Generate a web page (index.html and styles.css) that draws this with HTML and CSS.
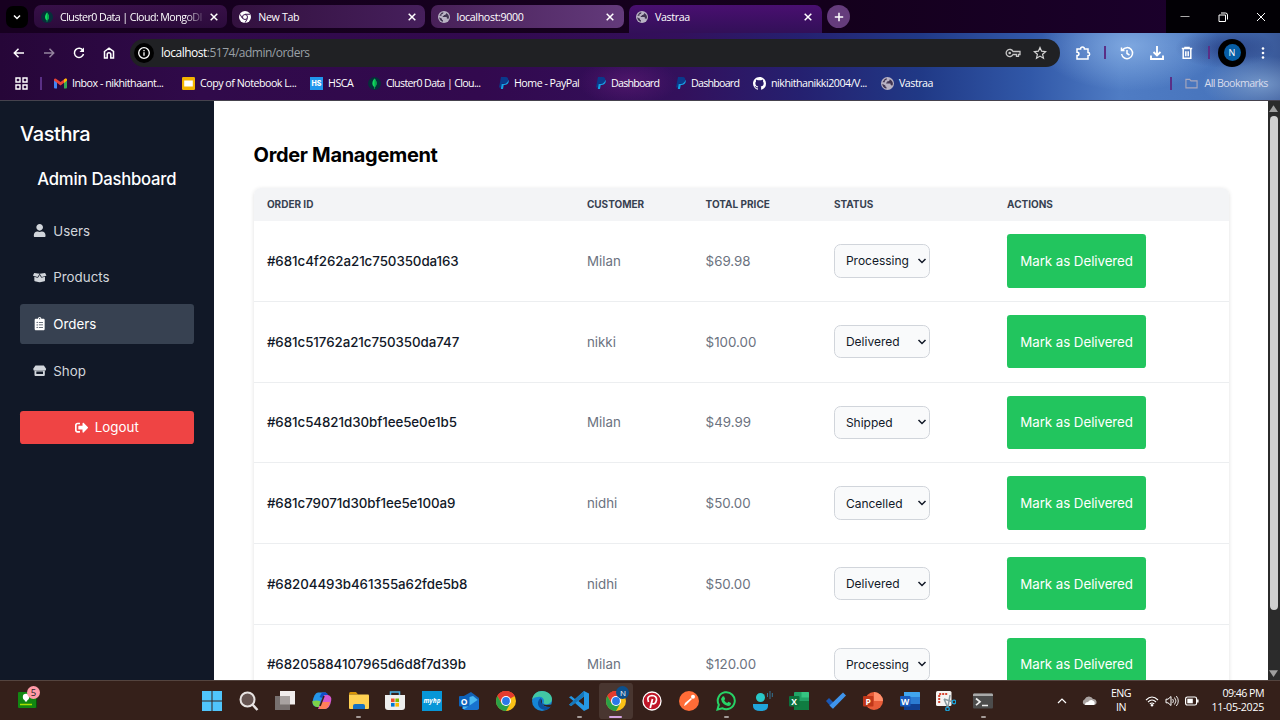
FILE: index.html
```html
<!DOCTYPE html>
<html lang="en">
<head>
<meta charset="utf-8">
<title>Vastraa</title>
<link rel="stylesheet" href="styles.css">
</head>
<body>
<svg class="defs" width="0" height="0" aria-hidden="true">
  <defs>
    <symbol id="x" viewBox="0 0 10 10"><path d="M1.7 1.7l6.6 6.6M8.3 1.7L1.7 8.3" stroke="#fff" stroke-width="1.5" fill="none"/></symbol>
    <symbol id="mongo" viewBox="0 0 13 13"><circle cx="6.5" cy="6.5" r="6.5" fill="#06303a"/><path d="M6.5 1.5C3.400 5 4 8.500 6.200 10v1.700h.6V10C9 8.500 9.600 5 6.500 1.500z" fill="#10dc60"/><path d="M6.500 1.500v9C9 8.500 9.600 5 6.500 1.500z" fill="#08aa4c"/></symbol>
    <symbol id="globe" viewBox="0 0 24 24"><circle cx="12" cy="12" r="12" fill="#b9b3c4"/><path d="M10 21.500C5.500 20.500 2.500 17 2.300 12.500l5.700 3v2l2 1zM20 16.500c-.6-1.500-1.500-2-2.500-2V12h-8v-2h2V8h2.500l2-2V4c3 1.300 6 4.500 6 8.500 0 1.500-.8 2.800-2 4zM3 9l4-5.500 4-1-1 3-3 1v3H3z" fill="#403451"/></symbol>
    <symbol id="paypal" viewBox="0 0 10 12"><path d="M2 0h4.500C9 0 9.800 2 9 4 8.300 6 7 6.800 4.500 6.800H3L2.300 10.500H0z" fill="#0a3a8c"/><path d="M9.400 2.800C10.600 5.500 8.500 8 5.800 8H4.700L4 12H1.800L2.700 7h2C7 7 8.900 5.500 9.400 2.800z" fill="#13a0e4"/></symbol>
    <symbol id="chrome" viewBox="0 0 24 24"><circle cx="12" cy="12" r="12" fill="#fbc116"/><path d="M12 12L1.610 6A12 12 0 0 1 22.390 6z" fill="#e33b2e"/><path d="M12 6h10.390A12 12 0 0 0 1.610 6L6.800 15z" fill="#e33b2e"/><path d="M1.610 6A12 12 0 0 0 12 24l5.200-9H6.800z" fill="#2aa147"/><circle cx="12" cy="12" r="6" fill="#fff"/><circle cx="12" cy="12" r="4.700" fill="#2a78e8"/></symbol>
    <symbol id="chevron" viewBox="0 0 10 8"><path d="M1.500 2L5 5.500 8.500 2" fill="none" stroke="#111827" stroke-width="1.500"/></symbol>
  </defs>
</svg>

<header class="browser">
  <div class="tabstrip">
    <button class="tab-search"><svg width="10" height="10" viewBox="0 0 10 10"><path d="M2 3.500l3 3 3-3" fill="none" stroke="#fff" stroke-width="1.500"/></svg></button>
    <div class="tab tab-one"><svg class="fav"><use href="#mongo"/></svg><span class="tab-title fade">Cluster0 Data | Cloud: MongoDI</span><svg class="close"><use href="#x"/></svg></div>
    <div class="tab tab-two"><svg class="fav" viewBox="0 0 24 24"><circle cx="12" cy="12" r="12" fill="#fff"/><circle cx="12" cy="12" r="5" fill="#fff" stroke="#3d174f" stroke-width="2"/><path d="M12 6.500h10M7 15L2 6.500M17 15l-5 8.500" stroke="#3d174f" stroke-width="2"/></svg><span class="tab-title">New Tab</span><svg class="close"><use href="#x"/></svg></div>
    <div class="tab tab-three"><svg class="fav"><use href="#globe"/></svg><span class="tab-title">localhost:9000</span><svg class="close"><use href="#x"/></svg></div>
    <div class="tab active"><svg class="fav"><use href="#globe"/></svg><span class="tab-title">Vastraa</span><svg class="close"><use href="#x"/></svg></div>
    <button class="new-tab"><svg width="12" height="12" viewBox="0 0 12 12"><path d="M6 1.800v8.400M1.800 6h8.400" stroke="#fff" stroke-width="1.500"/></svg></button>
    <div class="window-controls">
      <span><svg width="12" height="12" viewBox="0 0 12 12"><path d="M1.500 5.500h9" stroke="#aaa" stroke-width="1"/></svg></span>
      <span><svg width="12" height="12" viewBox="0 0 12 12"><path d="M2 4h6.500v6.500H2z" fill="none" stroke="#fff"/><path d="M4 2h4.500a2 2 0 0 1 2 2v4.500" fill="none" stroke="#fff"/></svg></span>
      <span><svg width="12" height="12" viewBox="0 0 12 12"><path d="M2 2l8 8M10 2l-8 8" stroke="#fff"/></svg></span>
    </div>
  </div>

  <div class="toolbar">
    <div class="nav-buttons">
      <svg viewBox="0 0 16 16"><path d="M13 8H3.500M7.500 3.800L3.300 8l4.200 4.200" class="ln"/></svg>
      <svg viewBox="0 0 16 16" opacity=".5"><path d="M3 8H12.500M8.500 3.800L12.700 8l-4.200 4.200" class="ln"/></svg>
      <svg viewBox="0 0 16 16"><path d="M12 5.500A4.600 4.600 0 1 0 12.500 9" class="ln"/><path d="M13 2.500V7H8.500z" fill="#fff"/></svg>
      <svg viewBox="0 0 16 16"><path d="M3.500 6.500L8 3.200l4.500 3.300v6.600H9.800V9.500a1.800 1.800 0 0 0-3.600 0v3.600H3.500z" class="ln"/></svg>
    </div>
    <div class="omnibox">
      <span class="site-info"><svg width="14" height="14" viewBox="0 0 14 14"><circle cx="7" cy="7" r="5.300" fill="none" stroke="#fff" stroke-width="1.300"/><path d="M7 6.200v3.600M7 4v1.300" stroke="#fff" stroke-width="1.300"/></svg></span>
      <span class="url"><b>localhost</b>:5174/admin/orders</span>
      <svg class="key" width="16" height="12" viewBox="0 0 16 12"><path d="M8 4.500A3.600 3.600 0 1 0 8 7.500h3.500V9.300h2V7.500H15V4.500z" fill="none" stroke="#c7c7c7" stroke-width="1.300"/><circle cx="4.700" cy="6" r="1.300" fill="#c7c7c7"/></svg>
      <svg width="14" height="14" viewBox="0 0 14 14"><path d="M7 1.500l1.600 3.700 4 .4-3 2.700.9 3.900L7 10.100l-3.500 2.100.9-3.900-3-2.700 4-.4z" fill="none" stroke="#d5d5d5" stroke-width="1.200"/></svg>
    </div>
    <div class="tools">
      <svg class="puzzle" viewBox="0 0 16 16"><path d="M2 4h3.600c0-2.600 3.800-2.600 3.800 0H13v3.500c2.200 0 2.200 3.300 0 3.300V14H2v-3.500c2.600 0 2.600-3.200 0-3.200z" class="ln"/></svg>
      <i class="sep"></i>
      <svg class="history" viewBox="0 0 16 16"><path d="M3.500 5A5.500 5.500 0 1 1 2.600 9M2.500 2.500V5.500h3M8 5v3.500l2.500 1.500" class="ln"/></svg>
      <svg class="download" viewBox="0 0 16 16"><path d="M8 1v9M4.500 7L8 10.500 11.500 7M2 10.500V14h12v-3.500" class="ln heavy"/></svg>
      <svg class="trash" viewBox="0 0 16 16"><path d="M2.800 3.500h10.400M6 3V2.400h4v1M4.200 4v9.300h7.600V4M6.800 6.200v5M9.200 6.200v5" class="ln"/></svg>
      <i class="sep"></i>
      <span class="profile"><span>N</span></span>
      <svg class="dots" viewBox="0 0 4 14"><circle cx="2" cy="2.500" r="1.300" fill="#fff"/><circle cx="2" cy="7" r="1.300" fill="#fff"/><circle cx="2" cy="11.500" r="1.300" fill="#fff"/></svg>
    </div>
  </div>

  <div class="bookmarks">
    <svg class="apps" viewBox="0 0 13 13"><path d="M1 1h4v4H1zM8 1h4v4H8zM1 8h4v4H1zM8 8h4v4H8z" fill="none" stroke="#fff" stroke-width="1.400"/></svg>
    <i class="sep"></i>
    <div class="bm bm-mail"><svg viewBox="0 0 13 13"><path d="M0 2.500L3 4v7.500H1q-1 0-1-1z" fill="#4285f4"/><path d="M13 2.500L10 4v7.500h2q1 0 1-1z" fill="#34a853"/><path d="M0 3.500V2.600Q.6 1 2 1.700L6.500 5 11 1.700q1.400-.7 2 .9v.9L6.500 8.500z" fill="#ea4335"/><path d="M10 2.500l1-.8q1.400-.7 2 .9v1L10 6z" fill="#fbbc04"/></svg><span>Inbox - nikhithaant...</span></div>
    <div class="bm bm-slides"><svg viewBox="0 0 13 13"><rect width="13" height="13" rx="1.300" fill="#f4b400"/><rect x="2.200" y="3.500" width="8.600" height="6" fill="#fff"/></svg><span>Copy of Notebook L...</span></div>
    <div class="bm bm-hsca"><svg viewBox="0 0 13 13"><rect width="13" height="13" fill="#2196ed"/><text x="6.500" y="9.200" class="hs">HS</text></svg><span>HSCA</span></div>
    <div class="bm bm-cluster"><svg><use href="#mongo"/></svg><span>Cluster0 Data | Clou...</span></div>
    <div class="bm bm-home"><svg class="pp"><use href="#paypal"/></svg><span>Home - PayPal</span></div>
    <div class="bm bm-dash"><svg class="pp"><use href="#paypal"/></svg><span>Dashboard</span></div>
    <div class="bm bm-dash2"><svg class="pp"><use href="#paypal"/></svg><span>Dashboard</span></div>
    <div class="bm bm-git"><svg viewBox="0 0 16 16"><path fill="#fff" d="M8 0C3.580 0 0 3.580 0 8c0 3.540 2.290 6.530 5.470 7.590.4.070.55-.17.55-.38 0-.19-.01-.82-.01-1.490-2.010.37-2.530-.49-2.690-.94-.09-.23-.48-.94-.82-1.130-.28-.15-.68-.52-.01-.53.63-.01 1.080.58 1.230.82.72 1.210 1.870.87 2.330.66.07-.52.28-.87.51-1.070-1.780-.2-3.640-.89-3.640-3.950 0-.87.31-1.590.82-2.150-.08-.2-.36-1.020.08-2.120 0 0 .67-.21 2.200.82a7.600 7.600 0 0 1 4 0c1.530-1.040 2.200-.82 2.200-.82.44 1.100.16 1.920.08 2.120.51.56.82 1.270.82 2.150 0 3.070-1.870 3.750-3.650 3.950.29.25.54.73.54 1.480 0 1.070-.01 1.930-.01 2.200 0 .21.15.46.55.38A8 8 0 0 0 16 8c0-4.420-3.580-8-8-8z"/></svg><span>nikhithanikki2004/V...</span></div>
    <div class="bm bm-vastraa"><svg><use href="#globe"/></svg><span>Vastraa</span></div>
    <i class="sep last"></i>
    <div class="bm bm-all"><svg viewBox="0 0 14 12"><path d="M1 1.500h4l1.500 1.700H13v7.500H1z" fill="none" stroke="#a9a8bd" stroke-width="1.200"/></svg><span>All Bookmarks</span></div>
  </div>
</header>

<div class="page">
  <aside class="sidebar">
    <div class="brand">Vasthra</div>
    <h2 class="side-title">Admin Dashboard</h2>
    <nav class="menu">
      <a class="menu-item"><svg viewBox="0 0 448 512"><path d="M224 256c70.700 0 128-57.300 128-128S294.700 0 224 0 96 57.300 96 128s57.300 128 128 128zm89.600 32h-16.700c-22.200 10.200-46.900 16-72.900 16s-50.600-5.800-72.900-16h-16.700C60.200 288 0 348.200 0 422.400V464c0 26.500 21.500 48 48 48h352c26.500 0 48-21.500 48-48v-41.600c0-74.200-60.200-134.400-134.400-134.400z"/></svg>Users</a>
      <a class="menu-item"><svg viewBox="0 0 640 512"><path d="M425.700 256c-16.900 0-32.800-9-41.400-23.400L320 126l-64.200 106.600c-8.700 14.500-24.600 23.500-41.500 23.500-4.500 0-9-.6-13.300-1.900L64 215v178c0 14.700 10 27.500 24.200 31l216.200 54.100c10.200 2.500 20.900 2.500 31 0L551.800 424c14.200-3.600 24.200-16.400 24.200-31V215l-137 39.100c-4.300 1.300-8.800 1.900-13.300 1.900zm212.600-112.200L586.800 41c-3.100-6.200-9.800-9.800-16.700-8.900L320 64l91.700 152.100c3.800 6.300 11.400 9.300 18.500 7.300l197.900-56.500c9.900-2.900 14.700-13.900 10.200-23.100zM53.200 41L1.700 143.800c-4.600 9.200.3 20.200 10.100 23l197.900 56.500c7.100 2 14.700-1 18.500-7.300L320 64 69.800 32.100c-6.900-.8-13.500 2.700-16.600 8.900z"/></svg>Products</a>
      <a class="menu-item current"><svg viewBox="0 0 384 512"><path d="M336 64h-80c0-35.300-28.700-64-64-64s-64 28.700-64 64H48C21.500 64 0 85.500 0 112v352c0 26.500 21.500 48 48 48h288c26.500 0 48-21.500 48-48V112c0-26.500-21.500-48-48-48zM96 424c-13.300 0-24-10.700-24-24s10.700-24 24-24 24 10.700 24 24-10.700 24-24 24zm0-96c-13.300 0-24-10.700-24-24s10.700-24 24-24 24 10.700 24 24-10.700 24-24 24zm0-96c-13.300 0-24-10.700-24-24s10.700-24 24-24 24 10.700 24 24-10.700 24-24 24zm96-192c13.300 0 24 10.700 24 24s-10.700 24-24 24-24-10.700-24-24 10.700-24 24-24zm128 368c0 4.400-3.600 8-8 8H168c-4.400 0-8-3.600-8-8v-16c0-4.400 3.600-8 8-8h144c4.400 0 8 3.600 8 8v16zm0-96c0 4.400-3.600 8-8 8H168c-4.400 0-8-3.600-8-8v-16c0-4.400 3.600-8 8-8h144c4.400 0 8 3.600 8 8v16zm0-96c0 4.400-3.600 8-8 8H168c-4.400 0-8-3.600-8-8v-16c0-4.400 3.600-8 8-8h144c4.400 0 8 3.600 8 8v16z"/></svg>Orders</a>
      <a class="menu-item"><svg viewBox="0 0 16 14"><path d="M3 .8h10l2.700 3.900q.3 2.300-1.700 2.300H2Q0 7 .3 4.700z"/><path fill-rule="evenodd" d="M1.800 7.300h12.400v5q0 1.200-1.200 1.200H3q-1.200 0-1.200-1.200zM4 8.100v2.800h8V8.100z"/></svg>Shop</a>
    </nav>
    <button class="logout"><svg viewBox="0 0 512 512"><path d="M497 273L329 441c-15 15-41 4.500-41-17v-96H152c-13.300 0-24-10.700-24-24v-96c0-13.300 10.700-24 24-24h136V88c0-21.400 25.900-32 41-17l168 168c9.300 9.400 9.300 24.600 0 34zM192 436v-40c0-6.600-5.400-12-12-12H96c-17.700 0-32-14.300-32-32V160c0-17.700 14.300-32 32-32h84c6.600 0 12-5.400 12-12V76c0-6.600-5.400-12-12-12H96c-53 0-96 43-96 96v192c0 53 43 96 96 96h84c6.600 0 12-5.400 12-12z"/></svg>Logout</button>
  </aside>

  <main class="content">
    <h1>Order Management</h1>
    <div class="card">
      <table>
        <colgroup><col class="c-id"><col class="c-customer"><col class="c-price"><col class="c-status"><col></colgroup>
        <thead><tr><th>Order ID</th><th>Customer</th><th>Total Price</th><th>Status</th><th>Actions</th></tr></thead>
        <tbody>
          <tr><td class="id">#681c4f262a21c750350da163</td><td>Milan</td><td>$69.98</td><td><div class="select">Processing<svg><use href="#chevron"/></svg></div></td><td><button class="deliver">Mark as Delivered</button></td></tr>
          <tr><td class="id">#681c51762a21c750350da747</td><td>nikki</td><td>$100.00</td><td><div class="select">Delivered<svg><use href="#chevron"/></svg></div></td><td><button class="deliver">Mark as Delivered</button></td></tr>
          <tr><td class="id">#681c54821d30bf1ee5e0e1b5</td><td>Milan</td><td>$49.99</td><td><div class="select">Shipped<svg><use href="#chevron"/></svg></div></td><td><button class="deliver">Mark as Delivered</button></td></tr>
          <tr><td class="id">#681c79071d30bf1ee5e100a9</td><td>nidhi</td><td>$50.00</td><td><div class="select">Cancelled<svg><use href="#chevron"/></svg></div></td><td><button class="deliver">Mark as Delivered</button></td></tr>
          <tr><td class="id">#68204493b461355a62fde5b8</td><td>nidhi</td><td>$50.00</td><td><div class="select">Delivered<svg><use href="#chevron"/></svg></div></td><td><button class="deliver">Mark as Delivered</button></td></tr>
          <tr><td class="id">#68205884107965d6d8f7d39b</td><td>Milan</td><td>$120.00</td><td><div class="select">Processing<svg><use href="#chevron"/></svg></div></td><td><button class="deliver">Mark as Delivered</button></td></tr>
        </tbody>
      </table>
    </div>
  </main>

  <div class="scrollbar">
    <svg viewBox="0 0 8 8"><path d="M4 1L8 7H0z" fill="#9f9f9f"/></svg>
    <div class="thumb"></div>
    <svg viewBox="0 0 8 8"><path d="M4 7L0 1h8z" fill="#9f9f9f"/></svg>
  </div>
</div>

<footer class="taskbar">
  <div class="widget"><svg width="20" height="16" viewBox="0 0 20 16"><rect width="18" height="16" rx="1" fill="#128712"/><path d="M18 3h1v13h-1z" fill="#0a4d0b"/><circle cx="8" cy="5" r="3.200" fill="#fff"/><path d="M6 6h4l-1 3.500H7z" fill="#fff"/><path d="M2 12.500h12" stroke="#a8e000" stroke-width="1.500"/></svg><span class="badge">5</span></div>
  <div class="apps-row">
    <span class="app"><svg viewBox="0 0 20 20"><path d="M0 0h9.500v9.500H0zM10.500 0H20v9.500h-9.500zM0 10.500h9.500V20H0zM10.500 10.500H20V20h-9.500z" fill="#50c5fb"/></svg></span>
    <span class="app"><svg viewBox="0 0 20 20"><circle cx="8.500" cy="8.500" r="7" fill="#665451" stroke="#e8e3e2" stroke-width="2"/><path d="M13.500 13.500L18.500 19" stroke="#e8e3e2" stroke-width="2.400"/></svg></span>
    <span class="app"><svg viewBox="0 0 20 20"><path d="M5 0h15v13.500H5z" fill="#f1eded"/><path d="M0 5h15v14H0z" fill="#77706f"/><path d="M5 5h10v8.500H5z" fill="#a8a2a1"/></svg></span>
    <span class="app"><svg viewBox="0 0 20 20"><path d="M6 1.500h8L9.500 16H5Q.3 15.500.5 11 2 2 6 1.500z" fill="#2496e9"/><path d="M.5 10q4-1 7.500 0L7.500 16H5Q.2 15 .5 10z" fill="#7ed248"/><path d="M13.500 4H16q4 1 3.200 5.500Q18 17.500 13 18H6l4-9.500Q11 4 13.500 4z" fill="#d458cf"/><path d="M9.500 11H18q-1.700 7-5 7H7z" fill="#ff7f59"/><path d="M10 1.500h3.500q2 0 2.500 2.500h-4l-1.500 3-3-1z" fill="#144ec7"/><path d="M12 5L8 15" stroke="#35201a" stroke-width="1.600"/></svg></span>
    <span class="app running"><svg viewBox="0 0 20 20"><path d="M0 3q0-2 1.500-2H7l2 2.500h-9z" fill="#d99507"/><path d="M0 3.500h19q1 0 1 1V17q0 1-1 1H1q-1 0-1-1z" fill="#ffd152"/><path d="M4 18v-3q0-2 2-2h8q2 0 2 2v3z" fill="#1471c4"/></svg></span>
    <span class="app"><svg viewBox="0 0 20 20"><path d="M5.500 5V1h9v4" fill="none" stroke="#48b1e6" stroke-width="1.500"/><path d="M0 4h20v12q0 3-3 3H3q-3 0-3-3z" fill="#eee"/><path d="M6 7.500h3.600v3.600H6z" fill="#ed4d2b"/><path d="M10.400 7.500H14v3.600h-3.600z" fill="#7fba00"/><path d="M6 12h3.600v3.600H6z" fill="#0078d4"/><path d="M10.400 12H14v3.600h-3.600z" fill="#ffb900"/></svg></span>
    <span class="app"><svg viewBox="0 0 20 20"><path d="M0 0h20v20H0z" fill="#0796d7"/><text x="10" y="12" class="hp">myhp</text></svg></span>
    <span class="app"><svg viewBox="0 0 20 20"><path d="M3 6l9-5 8 6v11H3z" fill="#1261b4"/><path d="M4 8l10-3 5 4v9H4z" fill="#49b8f0"/><path d="M4 19l16-11v9q0 2-2 2z" fill="#1872cf"/><rect y="5" width="10.500" height="10.500" rx="1" fill="#0c62bb"/><text x="5.200" y="13.500" class="logo">O</text></svg></span>
    <span class="app"><svg viewBox="0 0 20 20"><use href="#chrome"/></svg></span>
    <span class="app"><svg viewBox="0 0 20 20"><circle cx="10" cy="10" r="10" fill="#1685d5"/><path d="M0 9C1 3 5 0 10 0c6 0 10 4 10 8 0 4-4 6-7 5-2-.5-1-2-1-3 0-3-3-5-6-4C3 6 1 7 0 9z" fill="#42c7a4"/><path d="M9 7c-5 3-4 11 4 12 3 0 5-2 6-4-5 2-9 0-9-4z" fill="#0b4f9f"/><path d="M10 8c-2 3 0 6 4 6l6-.5v1L18 16q-7 0-8-4z" fill="#35201a"/></svg></span>
    <span class="app running"><svg viewBox="0 0 20 20"><path d="M15 0l5 2.400v15.200L15 20l-9-8-3.800 3L0 13.800 4.500 10 0 6.300 2.200 5 6 8zM15 5.500L9.400 10l5.600 4.500z" fill="#2598e4" fill-rule="evenodd"/><path d="M0 13.700L15 0v5.500L2.200 15z" fill="#1677bb"/></svg></span>
    <span class="app focused"><svg viewBox="0 0 20 20"><use href="#chrome"/></svg><b class="user-badge">N</b></span>
    <span class="app"><svg viewBox="0 0 20 20"><circle cx="10" cy="10" r="9" fill="#c01628" stroke="#fff" stroke-width="1.300"/><path d="M6.500 11Q4 5 10 4.500q5 .3 4.500 4.500-1 5-5 3.500" fill="none" stroke="#fff" stroke-width="1.700"/><path d="M10.500 8l-2.300 9" stroke="#fff" stroke-width="1.800"/></svg></span>
    <span class="app"><svg viewBox="0 0 20 20"><circle cx="10" cy="10" r="10" fill="#ff6c37"/><path d="M5 15l1-3 6-5 1 1-6 6z" fill="#fff"/><circle cx="14" cy="5.800" r="2" fill="#fff"/></svg></span>
    <span class="app running"><svg viewBox="0 0 20 20"><path d="M1.500 18.500l1.300-4.700A8.500 8.500 0 1 1 6.200 17.200z" fill="none" stroke="#27d366" stroke-width="2"/><path d="M6.500 5.500l1.500-.3 1.200 2.800-1 1.200q1 2 3 2.900l1.200-1.300 2.600 1.300q0 3-3 2.900-6-1.500-7-7z" fill="#27d366"/></svg></span>
    <span class="app"><svg viewBox="0 0 20 20"><circle cx="7.500" cy="6.500" r="4.500" fill="#29c8c8"/><path d="M0 13h15v2q0 5-7.500 5T0 15z" fill="#20a5db"/><path d="M14.500 2v4M17 0v8M19.300 2v4" stroke="#347394" stroke-width="1"/></svg></span>
    <span class="app"><svg viewBox="0 0 20 20"><rect x="5" y="1" width="15" height="18" rx="1" fill="#21a366"/><path d="M12.500 1H19q1 0 1 1v4.500h-7.500z" fill="#35c481"/><path d="M5 10h15v8q0 1-1 1H5z" fill="#107c41"/><rect y="5" width="10.500" height="10.500" rx="1" fill="#0c713c"/><text x="5.200" y="13.500" class="logo">X</text></svg></span>
    <span class="app"><svg viewBox="0 0 20 20"><path d="M0 10l3-3 7 7-3.500 3.500z" fill="#1a57b4"/><path d="M3.500 14.500L17 1.500l3 3L7 17.700z" fill="#3f94ec"/></svg></span>
    <span class="app"><svg viewBox="0 0 20 20"><circle cx="11" cy="10" r="9" fill="#e75c38"/><path d="M11 1a9 9 0 0 1 9 9h-9z" fill="#ff8f6b"/><rect y="5" width="10.500" height="10.500" rx="1" fill="#bf3719"/><text x="5.200" y="13.500" class="logo">P</text></svg></span>
    <span class="app"><svg viewBox="0 0 20 20"><rect x="4" y="1" width="16" height="18" rx="1" fill="#2b7cd3"/><path d="M4 1h15q1 0 1 1v4H4z" fill="#41a5ee"/><path d="M4 13h16v5q0 1-1 1H4z" fill="#103f91"/><rect y="5" width="10.500" height="10.500" rx="1" fill="#185abd"/><text x="5.200" y="13.500" class="logo">W</text></svg></span>
    <span class="app"><svg viewBox="0 0 20 20"><rect width="15.500" height="15" rx="1.500" fill="#f5f3f2"/><path d="M3.200 12V3h9" fill="none" stroke="#d9442f" stroke-width="2" stroke-dasharray="2 1"/><path d="M8 8l9 3M14 4l-2 12M8 8l4 9" stroke="#8a9aa0" stroke-width="1.500"/><circle cx="18" cy="11" r="1.800" fill="none" stroke="#1aa2d9" stroke-width="1.300"/><circle cx="11.500" cy="18" r="1.800" fill="none" stroke="#1aa2d9" stroke-width="1.300"/></svg></span>
    <span class="app running"><svg viewBox="0 0 20 20"><rect y="2.500" width="20" height="15" rx="1" fill="#4c4c4c"/><path d="M0 4q0-1.500 1-1.500h18q1 0 1 1.500v1H0z" fill="#a9a9a9"/><path d="M3 7.500l4 3.300-4 3.300M9 14.500h6" fill="none" stroke="#eee" stroke-width="1.700"/></svg></span>
  </div>
  <div class="tray">
    <svg class="up" width="10" height="8" viewBox="0 0 10 8"><path d="M1 6l4-4 4 4" fill="none" stroke="#fff" stroke-width="1.200"/></svg>
    <svg class="cloud" width="15" height="10" viewBox="0 0 15 10"><path d="M3 9a3 3 0 0 1-.3-5.700A4.500 4.500 0 0 1 11 3a3 3 0 0 1 1 6z" fill="#aaa3a1"/><path d="M3 9q0-3 3-3 2.500-3.500 5.500-1A2.600 2.600 0 0 1 12 9z" fill="#fff"/></svg>
    <div class="lang">ENG<br>IN</div>
    <svg class="wifi" width="14" height="12" viewBox="0 0 14 12"><path d="M1 5q6-6 12 0M3 7q4-4 8 0M4.800 9q2.200-2 4.400 0" fill="none" stroke="#fff" stroke-width="1.100"/><circle cx="7" cy="10.300" r="1.200" fill="#fff"/></svg>
    <svg class="sound" width="14" height="12" viewBox="0 0 14 12"><path d="M1 4.200h2L6 1.500v9L3 7.800H1z" fill="none" stroke="#fff"/><path d="M7.700 4q1.500 2 0 4M9.500 2.500q3 3.500 0 7M11.300 1q4 5 0 10" fill="none" stroke="#fff" stroke-width=".9"/></svg>
    <svg class="battery" width="14" height="10" viewBox="0 0 14 10"><rect x=".6" y="1" width="11" height="8" rx="1.800" fill="none" stroke="#fff" stroke-width="1.200"/><rect x="2.300" y="2.700" width="5.500" height="4.600" fill="#fff"/><path d="M12.800 3.500v3" stroke="#fff" stroke-width="1.500"/></svg>
    <div class="clock"><span class="time">09:46 PM</span><br>11-05-2025</div>
  </div>
</footer>
</body>
</html>
```

FILE: styles.css
```css
* { box-sizing: border-box; }
html { font-size: 13.3333px; }
body {
  margin: 0; width: 1280px; height: 720px; overflow: hidden;
  display: flex; flex-direction: column;
  font-family: Inter, "Liberation Sans", sans-serif;
}
button { border: 0; padding: 0; font: inherit; }
.defs { position: absolute; }
svg { flex: none; display: block; }
.ln { fill: none; stroke: #fff; stroke-width: 1.5; }
.heavy { stroke-width: 1.9; }

/* Browser frame */
.browser {
  height: 100.67px; flex: none; border-bottom: 1px solid #45424d;
  font-family: "Open Sans", "Noto Sans", sans-serif; font-size: 10.67px; color: #fff;
  display: flex; flex-direction: column;
  background:
    radial-gradient(ellipse 60px 28px at 1262px 84px, rgba(150,185,225,.6), transparent),
    radial-gradient(ellipse 50px 20px at 1225px 48px, rgba(20,30,95,.5), transparent),
    radial-gradient(ellipse 90px 45px at 1130px 46px, rgba(145,185,235,.7), transparent),
    radial-gradient(ellipse 50px 24px at 628px 82px, rgba(105,30,125,.5), transparent),
    linear-gradient(90deg, #260638 0, #300a4a 200px, #32094e 480px, #33105c 680px, #252070 800px, #203986 920px, #3158a8 1030px, #4f7cc4 1120px, #4875bd 1210px, #3a5999 1280px);
}
.tabstrip { height: 33px; flex: none; display: flex; align-items: flex-start; padding: 5px 0 0 6px; background: linear-gradient(90deg, #170020, #14001c 65%, #1d0030); }
.tab-search { width: 22px; height: 22px; margin: 1px 6px 0 0; border-radius: 7px; background: #000; display: grid; place-items: center; }
.tab { width: 193px; height: 23px; margin-right: 5.3px; border-radius: 7px; padding: 0 8.5px 0 7px; display: flex; align-items: center; }
.tab-one { background: linear-gradient(#371047, #2c0b3c); }
.tab-two { background: linear-gradient(90deg, #33113f, #461f5c); }
.tab-three { background: linear-gradient(90deg, #482058, #633a7b); }
.tab.active { height: 28px; padding-bottom: 5px; border-radius: 7px 7px 0 0; background: linear-gradient(#490f70, #321058); }
.fav { width: 12px; height: 12px; margin-right: 7px; }
.tab-title { flex: 1; white-space: nowrap; letter-spacing: -.35px; }
.fade { letter-spacing: -.56px; -webkit-mask-image: linear-gradient(90deg, #000 88%, rgba(0,0,0,.2)); mask-image: linear-gradient(90deg, #000 88%, rgba(0,0,0,.2)); }
.close { width: 10px; height: 10px; margin-left: 7px; }
.new-tab { width: 23px; height: 23px; border-radius: 50%; background: #653c7c; display: grid; place-items: center; }
.window-controls { margin: -5px 0 0 auto; width: 114px; height: 33px; background: #020005; display: flex; }
.window-controls span { flex: 1; display: grid; place-items: center; }

.toolbar { height: 39.500px; flex: none; display: flex; align-items: center; }
.nav-buttons { width: 130px; flex: none; padding-left: 10.500px; display: flex; gap: 14px; }
.nav-buttons svg { width: 16px; height: 16px; }
.omnibox { width: 930px; flex: none; height: 28px; border-radius: 14px; background: #202124; display: flex; align-items: center; padding: 0 13px 0 4px; }
.site-info { width: 20px; height: 20px; border-radius: 50%; background: #000; display: grid; place-items: center; margin-right: 7px; }
.url { flex: 1; font-size: 12px; color: #9aa0a6; letter-spacing: -.5px; }
.url b { font-weight: 400; color: #fff; }
.key { margin-right: 12px; }
.tools { flex: 1; display: flex; align-items: center; padding-left: 14.500px; }
.tools svg { width: 16px; height: 16px; }
.sep { width: 2px; height: 13px; background: #5a2f86; }
.tools .puzzle { margin-right: 13px; }
.tools .history { margin-left: 13.500px; }
.tools .download, .tools .trash { margin-left: 14px; }
.tools .trash + .sep { margin-left: 13px; }
.profile { width: 28px; height: 28px; margin-left: 8px; border-radius: 50%; background: #000; display: grid; place-items: center; }
.profile span { width: 17px; height: 17px; border-radius: 50%; background: #075ea6; font-size: 9px; line-height: 17px; text-align: center; }
.tools .dots { width: 4px; height: 14px; margin-left: 15px; }

.bookmarks { height: 21px; display: flex; align-items: center; padding-left: 15px; }
.apps { width: 13px; height: 13px; margin-right: 12px; }
.bm { flex: none; display: flex; align-items: center; white-space: nowrap; letter-spacing: -.48px; }
.bm svg { width: 13px; height: 13px; margin-right: 5px; }
.bm .pp { width: 12px; height: 12px; margin-right: 4px; }
.bm-mail { width: 128px; margin-left: 12px; }
.bm-slides { width: 128px; }
.bm-hsca { width: 58px; }
.bm-cluster { width: 130px; letter-spacing: -.66px; }
.bm-home { width: 97px; }
.bm-dash { width: 80px; letter-spacing: -.75px; }
.bm-dash2 { width: 78px; letter-spacing: -.75px; }
.bm-git { width: 128px; }
.bm-home span { letter-spacing: -.5px; }
.bm-vastraa { width: 55px; }
.bm-all { margin-left: 12.500px; color: #d9dcec; letter-spacing: -.6px; }
.bm-all svg { margin-right: 7px; }
.bookmarks .sep.last { margin-left: 234px; }
.hs { font: 800 7px Inter, sans-serif; fill: #fff; text-anchor: middle; letter-spacing: 0; }

/* Application */
.page { flex: 1; min-height: 0; display: flex; background: #fff; overflow: hidden; }
.sidebar { width: 213.600px; flex: none; padding: 20.700px 20px 0; background: #111827; color: #fff; display: flex; flex-direction: column; }
.brand { font-size: 1.5rem; line-height: 2rem; font-weight: 500; letter-spacing: -.4px; }
.side-title { margin: 1.5rem 0 19.300px; font-size: 1.25rem; line-height: 1.75rem; font-weight: 500; text-align: center; letter-spacing: -.22px; }
.menu { display: flex; flex-direction: column; gap: .5rem; }
.menu-item { height: 3rem; padding: 0 1rem; border-radius: .25rem; display: flex; align-items: center; gap: .5rem; color: #d1d5db; font-size: 1rem; }
.menu-item svg { width: 1rem; height: 1rem; fill: currentColor; }
.menu-item.current { background: #374151; color: #fff; }
.logout { margin-top: 1.5rem; height: 2.5rem; border-radius: .25rem; background: #ef4444; color: #fff; display: flex; align-items: center; justify-content: center; gap: .5rem; }
.logout svg { width: 1rem; height: 1rem; fill: currentColor; }

.content { flex: 1; min-width: 0; padding: 41px 39px 0 40px; overflow: hidden; }
h1 { margin: 0 0 1.5rem; font-size: 1.5rem; line-height: 2rem; font-weight: 700; color: #000; letter-spacing: -.32px; }
.card { border-radius: .5rem; box-shadow: 0 1px 4px rgba(0,0,0,.13); overflow: hidden; }
table { width: 100%; table-layout: fixed; border-collapse: collapse; text-align: left; color: #6b7280; }
.c-id { width: 320px; }
.c-customer { width: 118.7px; }
.c-price { width: 128.3px; }
.c-status { width: 173.2px; }
th { height: 32.500px; padding: 0 1rem; background: #f3f4f6; color: #374151; font-size: .75rem; line-height: 1rem; font-weight: 700; text-transform: uppercase; }
td { height: 80.67px; padding: 0 1rem; border-bottom: 1px solid #eceef0; font-size: 1rem; vertical-align: middle; }
.id { color: #111827; font-weight: 500; letter-spacing: -.06px; }
.select { display: flex; align-items: center; justify-content: space-between; width: 96px; height: 33.33px; padding: 0 2px 0 11px; border: 1px solid #d1d5db; border-radius: .5rem; background: #f9fafb; color: #111827; font-size: 12px; }
.select svg { width: 10px; height: 8px; }
.deliver { display: block; width: 139px; height: 4rem; border-radius: .25rem; background: #22c55e; color: #fff; white-space: nowrap; letter-spacing: -.06px; }

.scrollbar { width: 12.500px; flex: none; background: #2b2b2b; display: flex; flex-direction: column; align-items: center; padding: 3px 0 2px; }
.scrollbar svg { width: 9px; height: 9px; }
.thumb { width: 8px; height: 494px; margin: 3px 0 auto; border-radius: 4px; background: #cfcfcf; }

/* Taskbar */
.taskbar { height: 40px; flex: none; background: #35201a; border-top: 1px solid #54443f; display: flex; color: #fff; font-family: "Open Sans", "Noto Sans", sans-serif; }
.widget { width: 193.500px; flex: none; padding: 11px 0 0 18px; position: relative; }
.badge { position: absolute; left: 27px; top: 5px; width: 13px; height: 13px; border-radius: 50%; background: #ff9aa8; color: #222; font-size: 9.5px; line-height: 13px; text-align: center; }
.apps-row { display: flex; align-items: center; }
.app { width: 36.73px; height: 36px; display: grid; place-items: center; position: relative; }
.app svg { width: 20px; height: 20px; }
.running::after { content: ""; position: absolute; left: 16px; bottom: 1px; width: 5px; height: 2px; border-radius: 1px; background: #a59b98; }
.focused { background: #493630; background-clip: content-box; padding: 0 1.5px; border-radius: 4px; }
.focused::after { content: ""; position: absolute; left: 12px; bottom: 1px; width: 13px; height: 2px; border-radius: 1px; background: #d5a5e0; }
.user-badge { position: absolute; left: 19px; top: 3px; width: 13px; height: 13px; border-radius: 50%; background: #0c4f8b; font-size: 8px; line-height: 13px; font-weight: 400; text-align: center; }
.logo { font: 700 8.5px "Open Sans", sans-serif; fill: #fff; text-anchor: middle; }
.hp { font: italic 700 6.5px "Open Sans", sans-serif; fill: #fff; text-anchor: middle; }
.tray { flex: 1; display: flex; align-items: center; justify-content: flex-end; padding-right: 16px; font-size: 10.67px; line-height: 13.3px; letter-spacing: -.3px; }
.cloud { margin-left: 15px; }
.lang { width: 30px; margin: 0 9px 0 9px; text-align: center; letter-spacing: -.5px; }
.sound { margin-left: 6px; }
.battery { margin-left: 6px; }
.clock { width: 65px; text-align: right; white-space: nowrap; }
.time { letter-spacing: -.55px; }
```
